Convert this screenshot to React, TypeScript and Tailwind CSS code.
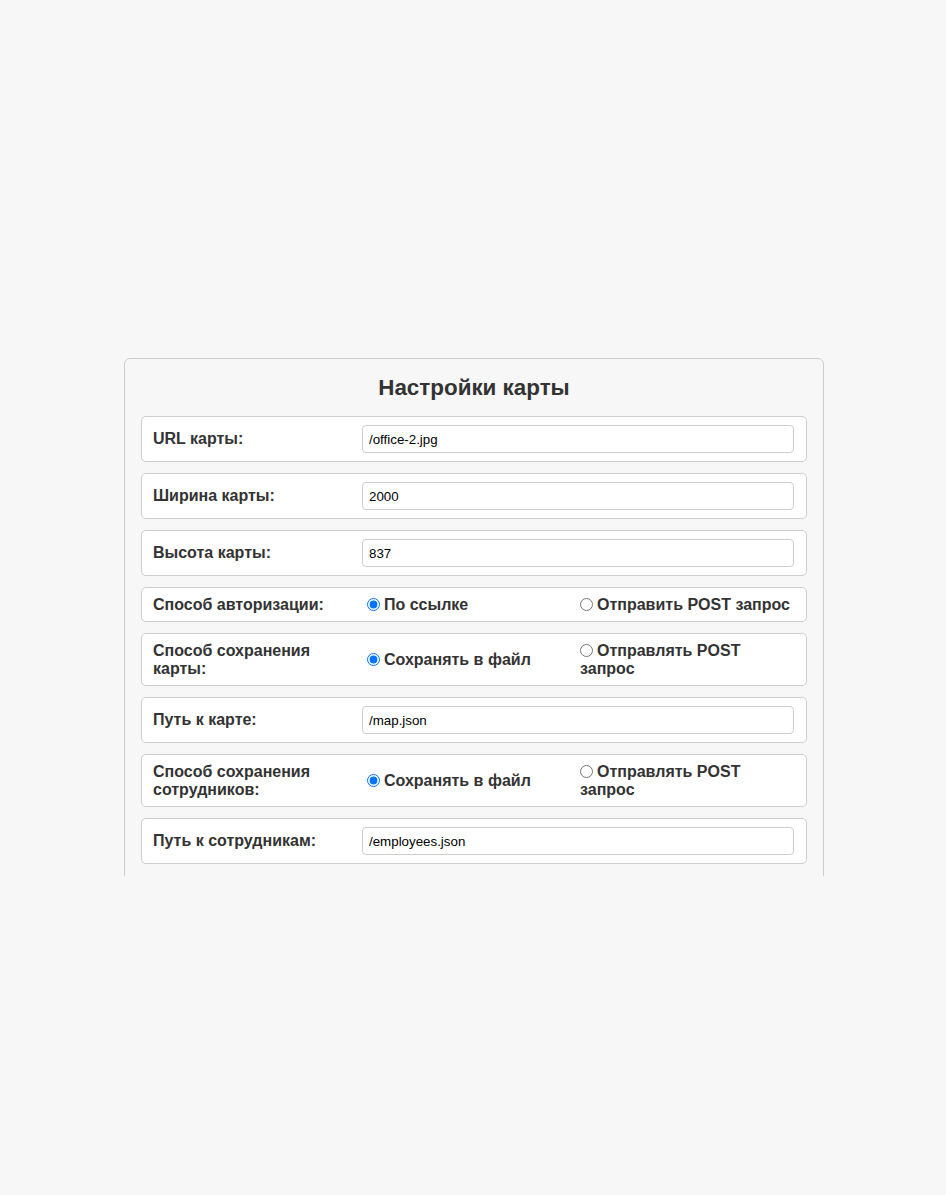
const fontStyle = "font-['Liberation_Sans',Arial,sans-serif]"

interface FieldRowProps {
  label: string
  value: string
}

function FieldRow({ label, value }: FieldRowProps) {
  return (
    <div className="flex h-[46px] items-center rounded-[5px] border border-[#ccc] bg-white pl-[11px] pr-[12px]">
      <div className="w-[209px] shrink-0 text-[16px] font-bold leading-[18px] text-[#333]">{label}</div>
      <input
        type="text"
        defaultValue={value}
        className="h-[28px] flex-1 rounded-[4px] border border-[#ccc] bg-white px-[6px] text-[13.33px] text-black outline-none"
      />
    </div>
  )
}

interface RadioRowProps {
  label: string
  name: string
  first: string
  second: string
  tall?: boolean
}

function RadioRow({ label, name, first, second, tall }: RadioRowProps) {
  return (
    <div
      className={
        "flex items-center rounded-[5px] border border-[#ccc] bg-white px-[11px] " +
        (tall ? "h-[53px]" : "h-[35px]")
      }
    >
      <div className="w-[209px] shrink-0 pr-2 text-[16px] font-bold leading-[18px] text-[#333]">{label}</div>
      <div className="flex flex-1 items-center">
        <label className="block w-[213px] shrink-0 pl-[5px] text-[16px] font-bold leading-[18px] text-[#333]">
          <input type="radio" name={name} defaultChecked className="mr-[4px] mt-[3px] align-[-1px]" />
          {first}
        </label>
        <label className="block min-w-0 flex-1 pl-[5px] text-[16px] font-bold leading-[18px] text-[#333]">
          <input type="radio" name={name} className="mr-[4px] mt-[3px] align-[-1px]" />
          {second}
        </label>
      </div>
    </div>
  )
}

export default function App() {
  return (
    <div className={"min-h-[1195px] bg-[#f7f7f7] pl-[2px] pt-[358px] " + fontStyle}>
      {/* Card is cut off at the bottom by its container */}
      <div className="mx-auto h-[518px] w-[700px] overflow-hidden">
        <div className="rounded-[6px] border border-[#ccc] bg-[#f7f7f7] px-4 pt-4 pb-[40px]">
          <h2 className="mb-[15px] h-[26px] text-center text-[22.4px] font-bold leading-[26px] text-[#333]">
            Настройки карты
          </h2>
          <div className="flex flex-col gap-[11px]">
            <FieldRow label="URL карты:" value="/office-2.jpg" />
            <FieldRow label="Ширина карты:" value="2000" />
            <FieldRow label="Высота карты:" value="837" />
            <RadioRow label="Способ авторизации:" name="auth" first="По ссылке" second="Отправить POST запрос" />
            <RadioRow
              label="Способ сохранения карты:"
              name="mapSave"
              first="Сохранять в файл"
              second="Отправлять POST запрос"
              tall
            />
            <FieldRow label="Путь к карте:" value="/map.json" />
            <RadioRow
              label="Способ сохранения сотрудников:"
              name="empSave"
              first="Сохранять в файл"
              second="Отправлять POST запрос"
              tall
            />
            <FieldRow label="Путь к сотрудникам:" value="/employees.json" />
          </div>
        </div>
      </div>
    </div>
  )
}
